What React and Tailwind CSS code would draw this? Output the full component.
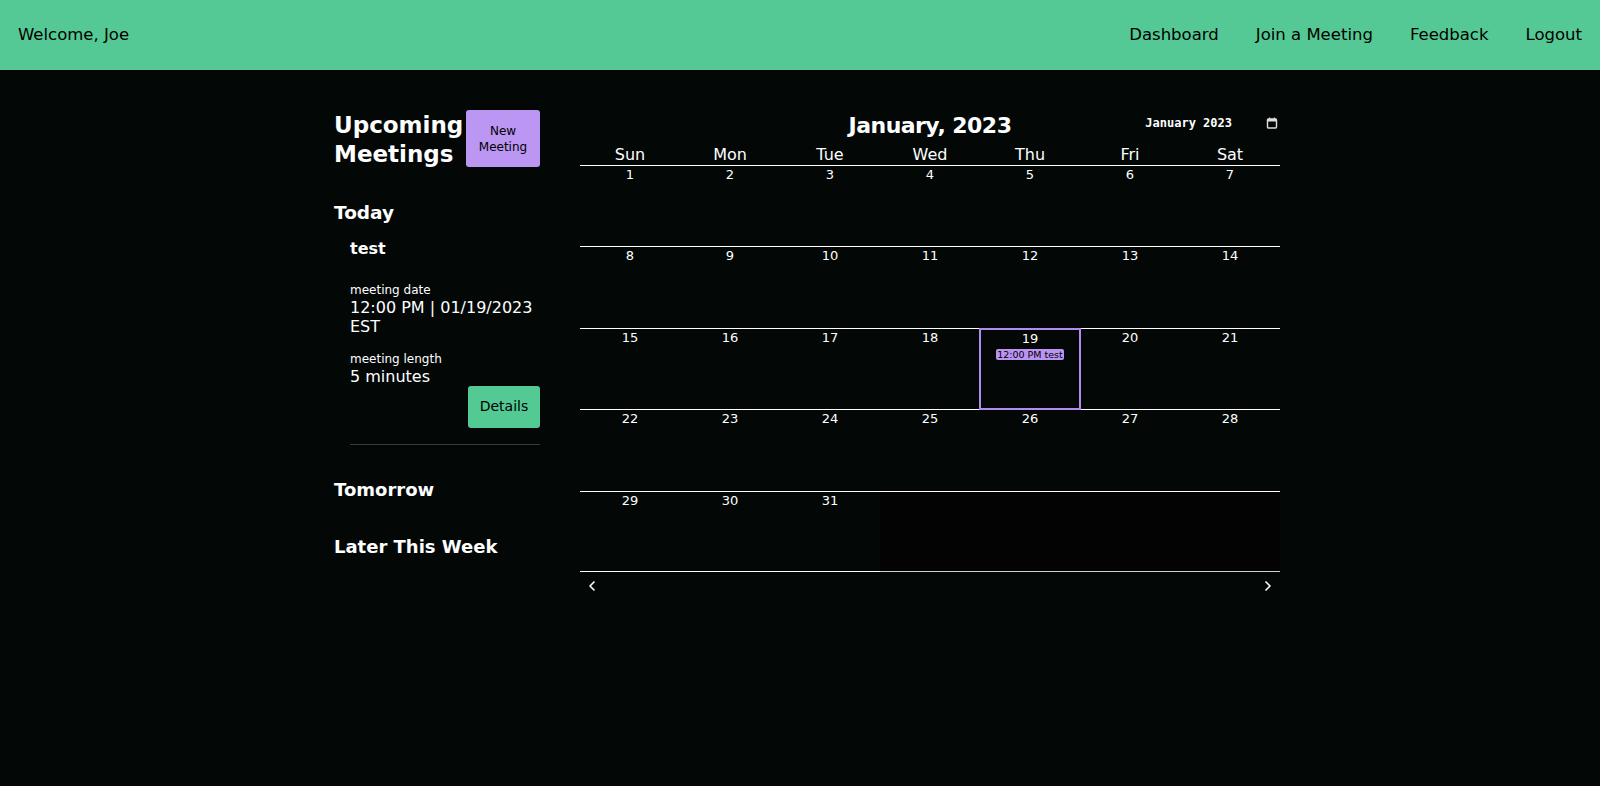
import { ChevronLeft, ChevronRight } from "lucide-react";

const FONT = "font-['DejaVu_Sans',sans-serif]";
const days = ["Sun", "Mon", "Tue", "Wed", "Thu", "Fri", "Sat"];

function buildWeeks() {
  const cells = [];
  for (let d = 1; d <= 31; d++) cells.push(d);
  while (cells.length < 35) cells.push(null);
  const weeks = [];
  for (let i = 0; i < 35; i += 7) weeks.push(cells.slice(i, i + 7));
  return weeks;
}

function DayCell({ day }) {
  if (day === null) {
    return <div className="h-[80.4px] bg-[#030303] border-b border-[#cfcfcf]" />;
  }
  const isEvent = day === 19;
  return (
    <div
      className={`flex flex-col items-center ${
        isEvent ? "h-[82.4px] border-2 border-[#b18cf0] -mx-[1px] -mt-[1px] -mb-[1px] relative" : "h-[80.4px]"
      } ${day >= 29 ? "border-b border-white" : ""}`}
    >
      <span className="text-[13px] leading-[18px] text-white">{day}</span>
      {isEvent && (
        <span className="mt-[1px] bg-[#b994f2] text-black text-[9.5px] leading-[11px] px-[1px] rounded-[2px]">
          12:00 PM test
        </span>
      )}
    </div>
  );
}

function Calendar() {
  const weeks = buildWeeks();
  return (
    <div className="w-[700px]">
      <div className="relative h-[34px] flex items-start justify-center pt-[2px]">
        <h2 className="text-[22px] leading-[28px] font-bold text-white tracking-tight">January, 2023</h2>
        <div className="absolute right-[2px] top-[4px] flex items-center gap-[34px]">
          <span className="font-['DejaVu_Sans_Mono',monospace] text-[12px] font-bold text-white">January 2023</span>
          <svg width="12" height="12" viewBox="0 0 12 12" fill="none">
            <rect x="1.5" y="2" width="9" height="9" rx="1" stroke="#ddd" strokeWidth="1.4" />
            <rect x="1.5" y="2" width="9" height="2.5" fill="#ddd" />
            <rect x="3" y="0.5" width="1.2" height="2" fill="#ddd" />
            <rect x="7.8" y="0.5" width="1.2" height="2" fill="#ddd" />
          </svg>
        </div>
      </div>
      <div className="grid grid-cols-7">
        {days.map((d) => (
          <div key={d} className="text-center text-[16px] leading-[21px] text-white">
            {d}
          </div>
        ))}
      </div>
      {weeks.map((w, i) => (
        <div key={i} className="grid grid-cols-7 border-t border-white">
          {w.map((d, j) => (
            <DayCell key={j} day={d} />
          ))}
        </div>
      ))}
      <div className="flex justify-between px-[4px] pt-[6px] text-white">
        <ChevronLeft size={16} strokeWidth={2.5} />
        <ChevronRight size={16} strokeWidth={2.5} />
      </div>
    </div>
  );
}

function Sidebar() {
  return (
    <div className="w-[206px] text-white">
      <div className="flex items-start justify-between">
        <h1 className="text-[23px] leading-[29px] font-bold mt-[1px]">
          Upcoming
          <br />
          Meetings
        </h1>
        <button className="shrink-0 w-[74px] h-[57px] bg-[#bb96f2] rounded-[3px] text-black text-[12px] leading-[16px]">
          New
          <br />
          Meeting
        </button>
      </div>
      <h3 className="mt-[30px] text-[18.5px] font-bold">Today</h3>
      <div className="ml-[16px] mt-[10px]">
        <div className="text-[16px] font-bold">test</div>
        <div className="mt-[22px] text-[12px] leading-[15px]">meeting date</div>
        <div className="text-[16px] leading-[19px]">
          12:00 PM | 01/19/2023
          <br />
          EST
        </div>
        <div className="mt-[16px] text-[12px] leading-[15px]">meeting length</div>
        <div className="text-[16px] leading-[19px]">5 minutes</div>
        <div className="flex justify-end">
          <button className="w-[72px] h-[42px] bg-[#53c994] rounded-[3px] text-black text-[14px]">
            Details
          </button>
        </div>
        <div className="mt-[16px] border-t border-[#3a3a3a]" />
      </div>
      <h3 className="mt-[31px] text-[18px] font-bold">Tomorrow</h3>
      <h3 className="mt-[30px] text-[18px] font-bold">Later This Week</h3>
    </div>
  );
}

export default function App() {
  return (
    <div className={`min-h-[786px] bg-[#030807] ${FONT}`}>
      <header className="h-[70px] bg-[#55c995] flex items-center justify-between px-[18px] pt-[1px] text-black text-[16.5px]">
        <span>Welcome, Joe</span>
        <nav className="flex gap-[37px]">
          <span>Dashboard</span>
          <span>Join a Meeting</span>
          <span>Feedback</span>
          <span>Logout</span>
        </nav>
      </header>
      <main className="flex gap-[40px] pl-[334px] pt-[40px]">
        <Sidebar />
        <Calendar />
      </main>
    </div>
  );
}
